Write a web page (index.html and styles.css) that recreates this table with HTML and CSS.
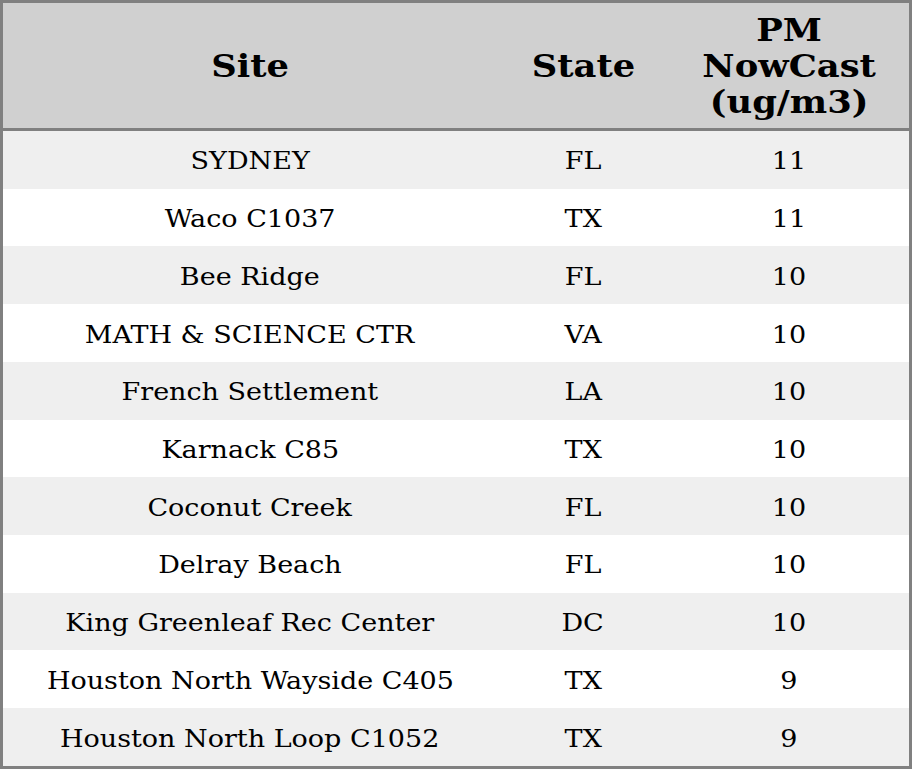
FILE: index.html
```html
<!DOCTYPE html>
<html>
<head>
<meta charset="utf-8">
<link rel="stylesheet" href="styles.css">
</head>
<body>
<table class="data">
  <colgroup>
    <col class="c-site">
    <col class="c-state">
    <col class="c-pm">
  </colgroup>
  <thead>
    <tr><th><span class="t">Site</span></th><th><span class="t">State</span></th><th><span class="t">PM<br>NowCast<br>(ug/m3)</span></th></tr>
  </thead>
  <tbody>
    <tr><td><span class="t">SYDNEY</span></td><td><span class="t">FL</span></td><td><span class="t">11</span></td></tr>
    <tr><td><span class="t">Waco C1037</span></td><td><span class="t">TX</span></td><td><span class="t">11</span></td></tr>
    <tr><td><span class="t">Bee Ridge</span></td><td><span class="t">FL</span></td><td><span class="t">10</span></td></tr>
    <tr><td><span class="t">MATH &amp; SCIENCE CTR</span></td><td><span class="t">VA</span></td><td><span class="t">10</span></td></tr>
    <tr><td><span class="t">French Settlement</span></td><td><span class="t">LA</span></td><td><span class="t">10</span></td></tr>
    <tr><td><span class="t">Karnack C85</span></td><td><span class="t">TX</span></td><td><span class="t">10</span></td></tr>
    <tr><td><span class="t">Coconut Creek</span></td><td><span class="t">FL</span></td><td><span class="t">10</span></td></tr>
    <tr><td><span class="t">Delray Beach</span></td><td><span class="t">FL</span></td><td><span class="t">10</span></td></tr>
    <tr><td><span class="t">King Greenleaf Rec Center</span></td><td><span class="t">DC</span></td><td><span class="t">10</span></td></tr>
    <tr><td><span class="t">Houston North Wayside C405</span></td><td><span class="t">TX</span></td><td><span class="t">9</span></td></tr>
    <tr><td><span class="t">Houston North Loop C1052</span></td><td><span class="t">TX</span></td><td><span class="t">9</span></td></tr>
  </tbody>
</table>
</body>
</html>
```
FILE: styles.css
```css
html, body {
  margin: 0;
  padding: 0;
  background: #ffffff;
}
.data {
  width: 912px;
  height: 769px;
  border-collapse: separate;
  border-spacing: 0;
  border: 3px solid #808080;
  box-sizing: border-box;
  table-layout: fixed;
  font-family: "DejaVu Serif", serif;
  color: #000;
}
.c-site { width: 494px; }
.c-state { width: 172px; }
.c-pm { width: 240px; }
.t {
  display: inline-block;
  transform: scaleX(1.14);
}
.data td .t {
  transform: scaleX(1.08);
}
.data th {
  height: 125px;
  padding: 0;
  background: #d0d0d0;
  border-bottom: 3px solid #808080;
  font-size: 31px;
  font-weight: bold;
  line-height: normal;
  text-align: center;
  vertical-align: middle;
}
.data td {
  padding: 2px 0 0;
  font-size: 25px;
  text-align: center;
  vertical-align: middle;
}
.data tbody tr:nth-child(odd) td {
  background: #efefef;
}
```
